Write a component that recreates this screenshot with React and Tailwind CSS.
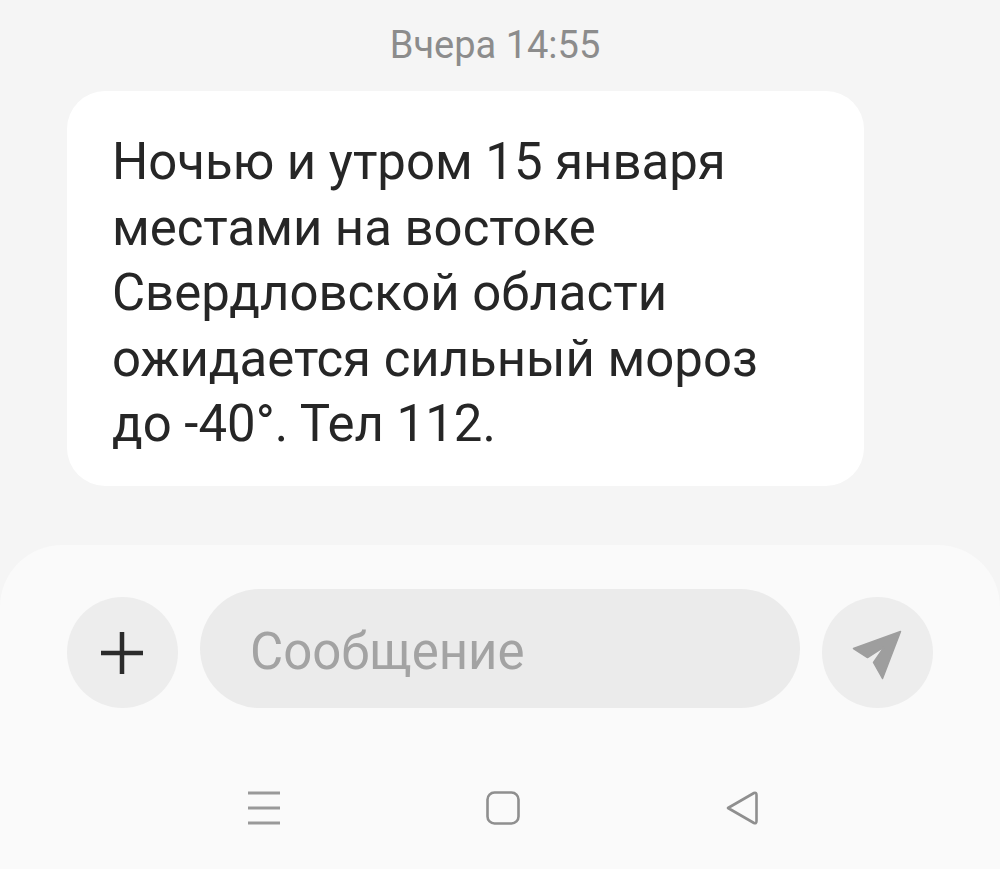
export default function App() {
  return (
    <div className="w-[1000px] h-[869px] bg-[#f5f5f5] flex flex-col overflow-hidden" style={{ fontFamily: "Roboto, 'Noto Sans', sans-serif" }}>
      <div className="h-[91px] flex items-center justify-center pb-[2px] pr-[10px] text-[38px] leading-none text-[#8c8c8c]">Вчера 14:55</div>
      <div className="ml-[67px] w-[797px] h-[395px] bg-white rounded-[38px] pl-[45px] pt-[38px] text-[50.9px] leading-[65.5px] text-[#262626]">
        <p>Ночью и утром 15 января</p>
        <p>местами на востоке</p>
        <p>Свердловской области</p>
        <p>ожидается сильный мороз</p>
        <p>до -40°. Тел 112.</p>
      </div>
      <div className="mt-[59px] flex-1 bg-[#fafafa] rounded-t-[62px] flex flex-col">
        <div className="mt-[44px] ml-[67px] w-[866px] h-[119px] flex items-end justify-between">
          <div className="w-[111px] h-[111px] rounded-full bg-[#ededed] flex items-center justify-center">
            <svg width="44" height="44" viewBox="0 0 44 44" fill="none" stroke="#2b2b2b" strokeWidth="4.5" className="-ml-[1px]">
              <path d="M1 22H43M22 1V43" />
            </svg>
          </div>
          <div className="w-[600px] h-[119px] rounded-[60px] bg-[#ebebeb] flex items-center pl-[50px] pt-[8px] text-[51px] text-[#a3a3a3]">Сообщение</div>
          <div className="w-[111px] h-[111px] rounded-full bg-[#ededed] flex items-center justify-center">
            <svg width="56" height="56" viewBox="0 0 56 56" fill="#9e9e9e">
              <path d="M3.500 23.500 L50.500 6.500 L32.500 53.500 L23.500 37.500 L34.500 21.500 L17.500 32.500 Z" stroke="#9e9e9e" strokeWidth="1.500" strokeLinejoin="round" />
            </svg>
          </div>
        </div>
        <div className="mt-[82px] pl-[248px] pr-[242px] h-[36px] flex items-center justify-between">
          <svg width="32" height="34" viewBox="0 0 32 34" fill="none" stroke="#999" strokeWidth="3"><path d="M0 2H32M0 17H32M0 32H32" /></svg>
          <svg width="34" height="34" viewBox="0 0 34 34" fill="none" stroke="#8f8f8f" strokeWidth="2.600"><rect x="1.500" y="1.500" width="31" height="31" rx="7" /></svg>
          <svg width="32" height="34" viewBox="0 0 32 34" fill="none" stroke="#8f8f8f" strokeWidth="2.600" strokeLinejoin="round"><path d="M2 17 L28 2 Q30.500 1 30.500 4 V30 Q30.500 33 28 32 Z" /></svg>
        </div>
      </div>
    </div>
  );
}
